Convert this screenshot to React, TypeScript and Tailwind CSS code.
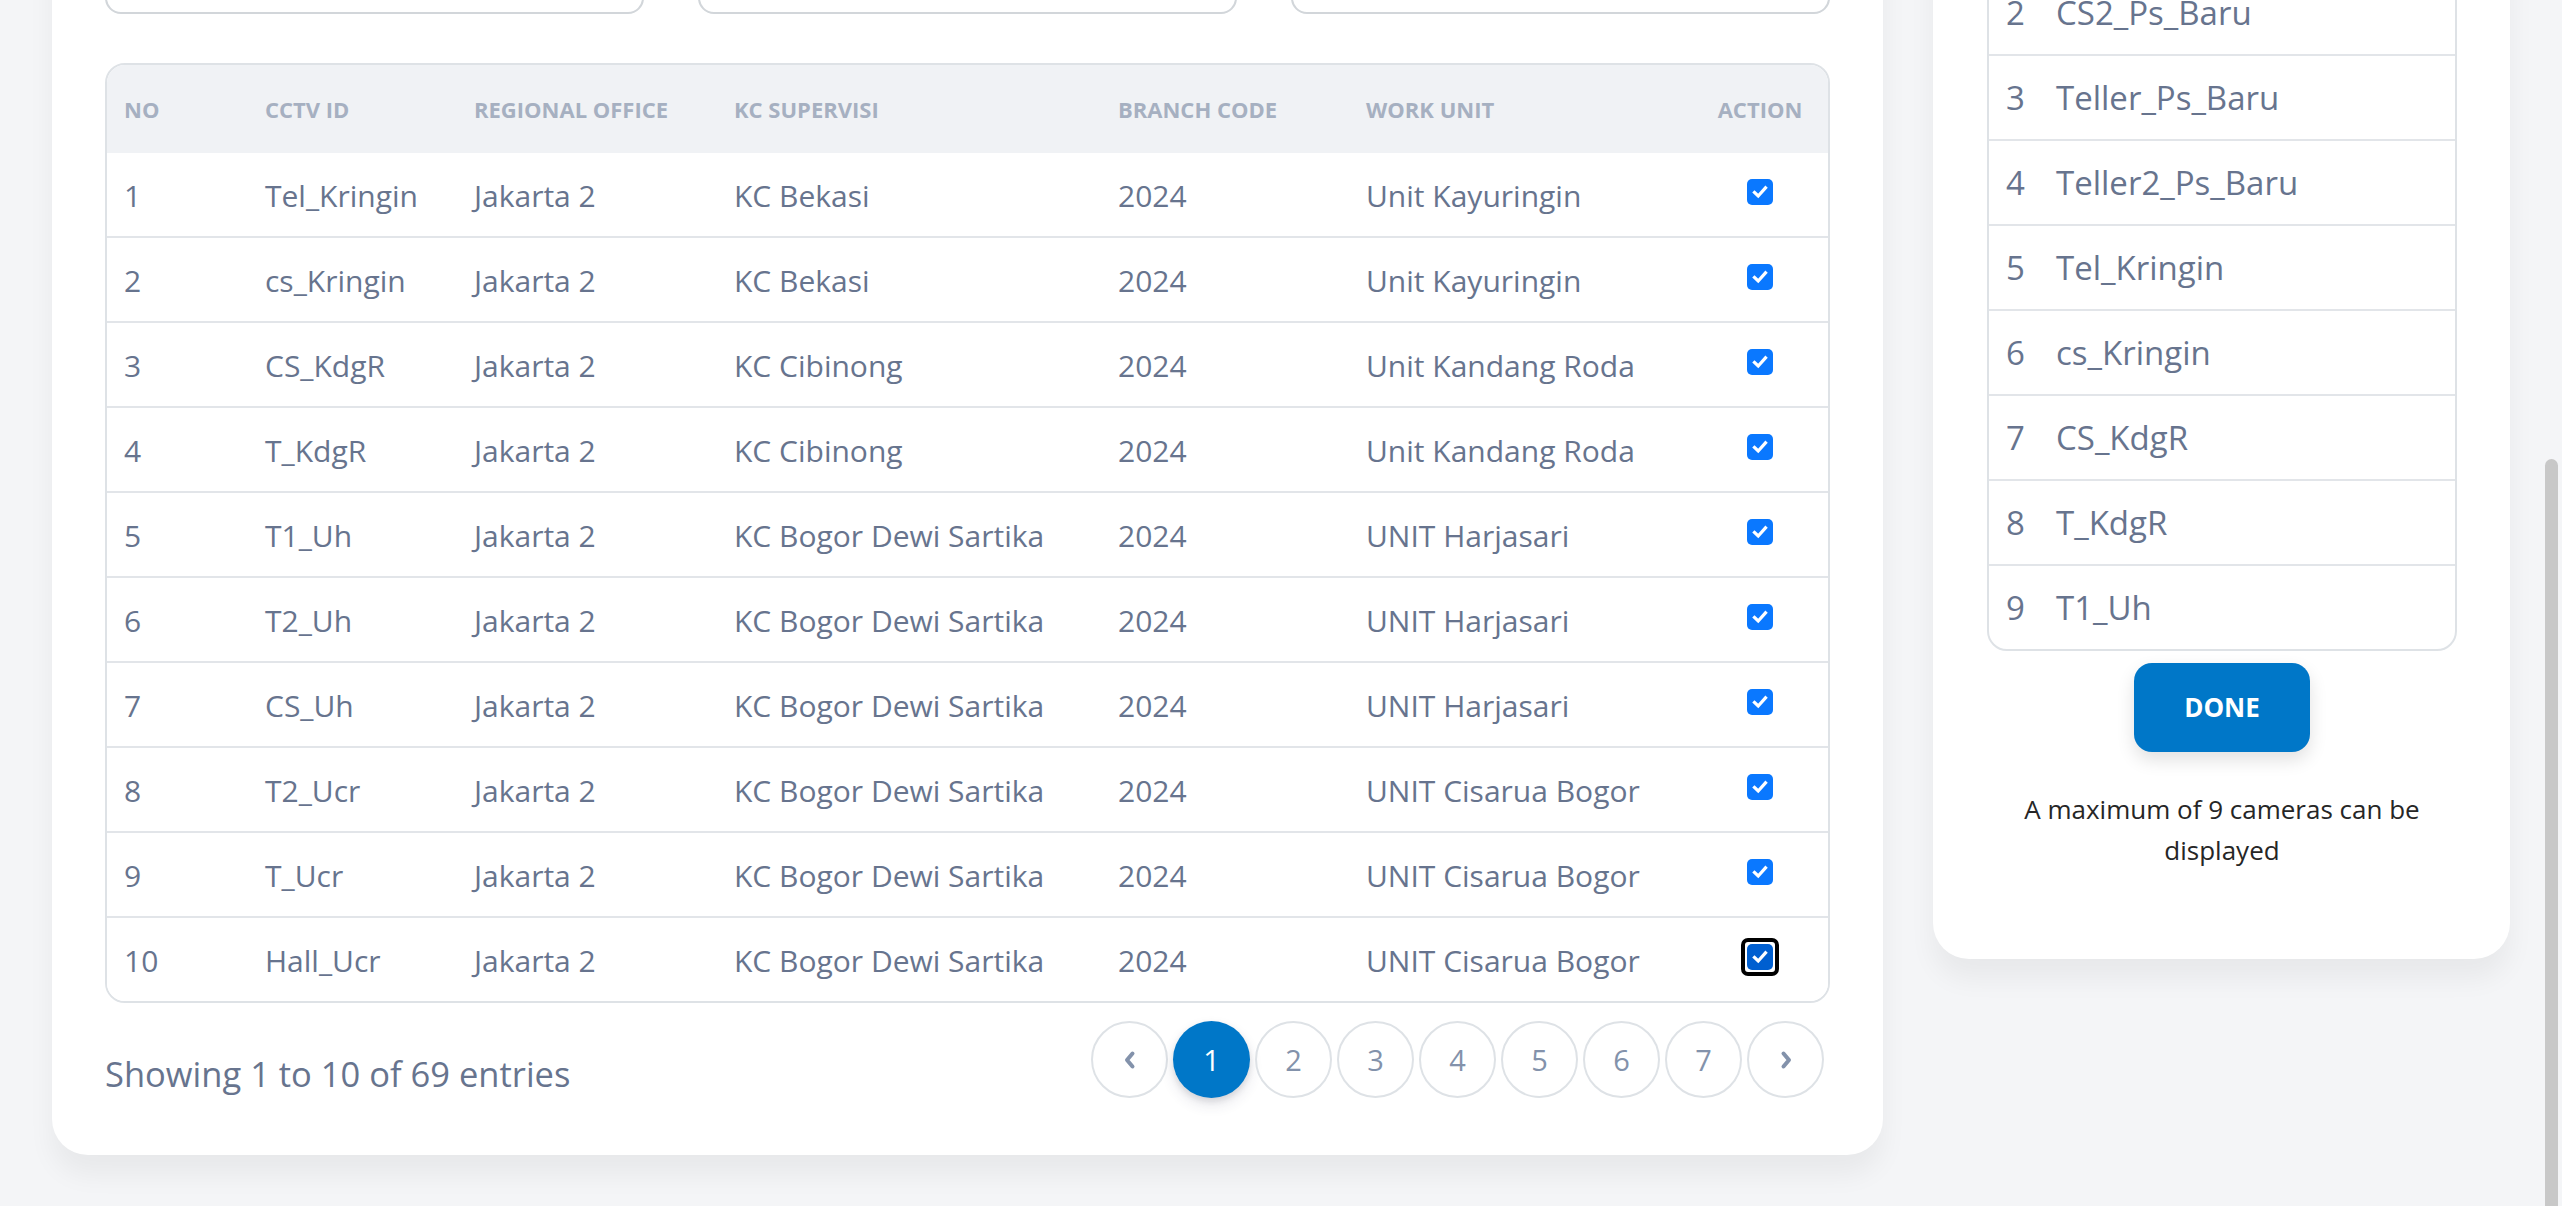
import React from "react";

const rows = [
  ["1", "Tel_Kringin", "Jakarta 2", "KC Bekasi", "2024", "Unit Kayuringin"],
  ["2", "cs_Kringin", "Jakarta 2", "KC Bekasi", "2024", "Unit Kayuringin"],
  ["3", "CS_KdgR", "Jakarta 2", "KC Cibinong", "2024", "Unit Kandang Roda"],
  ["4", "T_KdgR", "Jakarta 2", "KC Cibinong", "2024", "Unit Kandang Roda"],
  ["5", "T1_Uh", "Jakarta 2", "KC Bogor Dewi Sartika", "2024", "UNIT Harjasari"],
  ["6", "T2_Uh", "Jakarta 2", "KC Bogor Dewi Sartika", "2024", "UNIT Harjasari"],
  ["7", "CS_Uh", "Jakarta 2", "KC Bogor Dewi Sartika", "2024", "UNIT Harjasari"],
  ["8", "T2_Ucr", "Jakarta 2", "KC Bogor Dewi Sartika", "2024", "UNIT Cisarua Bogor"],
  ["9", "T_Ucr", "Jakarta 2", "KC Bogor Dewi Sartika", "2024", "UNIT Cisarua Bogor"],
  ["10", "Hall_Ucr", "Jakarta 2", "KC Bogor Dewi Sartika", "2024", "UNIT Cisarua Bogor"],
];

const selected = [
  "CS_Ps_Baru",
  "CS2_Ps_Baru",
  "Teller_Ps_Baru",
  "Teller2_Ps_Baru",
  "Tel_Kringin",
  "cs_Kringin",
  "CS_KdgR",
  "T_KdgR",
  "T1_Uh",
];

const headers = ["NO", "CCTV ID", "REGIONAL OFFICE", "KC SUPERVISI", "BRANCH CODE", "WORK UNIT"];

function CheckBox({ focused }: { focused?: boolean }) {
  const box = (
    <div
      className={
        "w-[26px] h-[26px] rounded-[5px] flex items-center justify-center " +
        (focused ? "bg-[#005fd0]" : "bg-[#0a78ff]")
      }
    >
      <svg width="18" height="18" viewBox="0 0 18 18" fill="none">
        <path d="M3.5 9.5 L7.2 13 L14.5 4.8" stroke="white" strokeWidth="3.2" strokeLinecap="square" strokeLinejoin="miter" />
      </svg>
    </div>
  );
  if (focused) {
    return <div className="rounded-[7px] border-[4px] border-black p-[2px] bg-white">{box}</div>;
  }
  return box;
}

function Chevron({ dir }: { dir: "left" | "right" }) {
  return (
    <svg width="16" height="22" viewBox="0 0 16 22" fill="none">
      <path
        d={dir === "left" ? "M10.5 4.5 L5 11 L10.5 17.5" : "M5.5 4.5 L11 11 L5.5 17.5"}
        stroke="#8392ab"
        strokeWidth="4"
        strokeLinecap="round"
        strokeLinejoin="round"
      />
    </svg>
  );
}

const grid = "grid grid-cols-[141px_209px_260px_384px_248px_343px_1fr]";

export default function App() {
  return (
    <div
      className="relative h-[1206px] w-full overflow-hidden bg-[#f4f5f7] flex items-start gap-[50px] pl-[52px]"
      style={{ fontFamily: '"Open Sans", "Noto Sans", sans-serif' }}
    >
      {/* Left card */}
      <div className="-mt-[140px] w-[1831px] shrink-0 rounded-[36px] bg-white px-[53px] pt-[82px] pb-[56px] shadow-[0_20px_27px_0_rgba(0,0,0,0.05)]">
        <div className="grid grid-cols-3 gap-[54px]">
          <div className="h-[72px] rounded-[16px] border-[2px] border-[#d2d6da] bg-white" />
          <div className="h-[72px] rounded-[16px] border-[2px] border-[#d2d6da] bg-white" />
          <div className="h-[72px] rounded-[16px] border-[2px] border-[#d2d6da] bg-white" />
        </div>

        <div className="mt-[49px] rounded-[20px] border-[2px] border-[#dee2e6] overflow-hidden">
          <div className={grid + " h-[88px] items-center bg-[#f0f2f5]"}>
            {headers.map((h) => (
              <div key={h} className="pl-[17px] text-[22px] font-bold text-[#a6b0c1] leading-none">
                {h}
              </div>
            ))}
            <div className="text-center text-[22px] font-bold text-[#a6b0c1] leading-none">ACTION</div>
          </div>
          {rows.map((r, i) => (
            <div
              key={r[0]}
              className={
                grid +
                " items-center bg-white " +
                (i < rows.length - 1 ? "h-[85px] border-b-[2px] border-[#e2e5e9]" : "h-[83px]")
              }
            >
              {r.map((c, j) => (
                <div key={j} className="pl-[17px] text-[30px] text-[#67748e] leading-none pt-[2px] whitespace-nowrap">
                  {c}
                </div>
              ))}
              <div className="flex justify-center -mt-[6px]">
                <CheckBox focused={i === rows.length - 1} />
              </div>
            </div>
          ))}
        </div>

        <div className="mt-[18px] flex items-start justify-between pr-[6px]">
          <div className="pt-[27px] text-[34.5px] leading-[51px] text-[#67748e]">Showing 1 to 10 of 69 entries</div>
          <div className="flex gap-[5px]">
            <div className="w-[77px] h-[77px] rounded-full border-[2px] border-[#dee2e6] flex items-center justify-center">
              <Chevron dir="left" />
            </div>
            {["1", "2", "3", "4", "5", "6", "7"].map((p) => (
              <div
                key={p}
                className={
                  "w-[77px] h-[77px] rounded-full flex items-center justify-center text-[29px] " +
                  (p === "1"
                    ? "bg-[#0077c8] text-white shadow-[0_7px_14px_rgba(50,50,93,0.12),0_3px_6px_rgba(0,0,0,0.1)]"
                    : "border-[2px] border-[#dee2e6] text-[#8392ab]")
                }
              >
                {p}
              </div>
            ))}
            <div className="w-[77px] h-[77px] rounded-full border-[2px] border-[#dee2e6] flex items-center justify-center">
              <Chevron dir="right" />
            </div>
          </div>
        </div>
      </div>

      {/* Right card */}
      <div className="-mt-[156px] w-[577px] shrink-0 rounded-[36px] bg-white pl-[54px] pr-[53px] pt-[40px] pb-[88px] shadow-[0_20px_27px_0_rgba(0,0,0,0.05)]">
        <div className="rounded-[20px] border-[2px] border-[#dee2e6] overflow-hidden">
          {selected.map((s, i) => (
            <div
              key={s}
              className={
                "flex items-center " +
                (i < selected.length - 1 ? "h-[85px] border-b-[2px] border-[#e2e5e9]" : "h-[83px]")
              }
            >
              <div className="w-[67px] pl-[17px] text-[33px] text-[#67748e] leading-none">{i + 1}</div>
              <div className="text-[33px] text-[#67748e] leading-none whitespace-nowrap">{s}</div>
            </div>
          ))}
        </div>
        <div className="mt-[12px] flex justify-center">
          <button className="w-[176px] h-[89px] rounded-[18px] bg-[#0077c8] text-white text-[26px] font-bold shadow-[0_8px_18px_rgba(0,0,0,0.12)]">
            DONE
          </button>
        </div>
        <p className="mt-[37px] text-center text-[26px] leading-[41px] text-[#262626] px-[20px]">
          A maximum of 9 cameras can be displayed
        </p>
      </div>

      {/* scrollbar thumb */}
      <div className="absolute right-[4px] top-[459px] bottom-[-20px] w-[13px] rounded-full bg-[#c8c8c8]" />
    </div>
  );
}
